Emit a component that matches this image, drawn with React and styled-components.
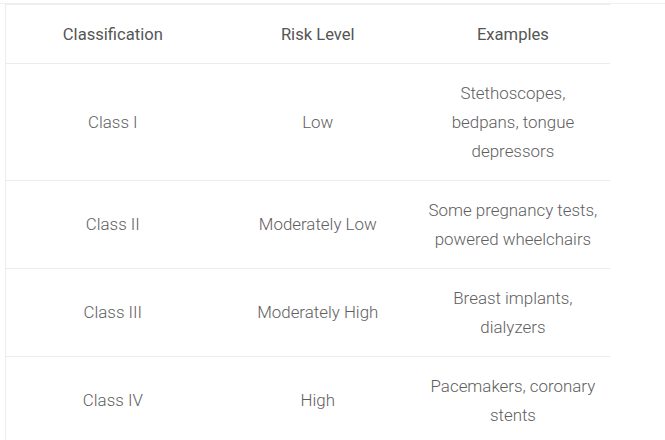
import React from "react";
import styled, { createGlobalStyle } from "styled-components";

const Global = createGlobalStyle`
  html, body { margin: 0; padding: 0; background: #fff; }
  body { padding-top: 3px; font-family: Roboto, "Liberation Sans", sans-serif; }
`;

const Frame = styled.div`
  border-top: 1px solid #efefef;
  padding-left: 5px;
`;

const Table = styled.table`
  border-collapse: collapse;
  table-layout: fixed;
  width: 605px;
  border-left: 1px solid #ececec;
  border-top: 1px solid #ececec;
`;

const Col = styled.col`
  width: ${(p) => p.$w}px;
`;

const HeadCell = styled.th`
  font-weight: 400;
  font-size: 16.6px;
  line-height: 29px;
  color: #555;
  text-align: center;
  padding: 14.5px 6px;
  border-bottom: 1px solid #ececec;
  white-space: nowrap;
`;

const Cell = styled.td`
  font-weight: 300;
  font-size: 16.9px;
  line-height: 29px;
  color: #5e5e5e;
  text-align: center;
  vertical-align: middle;
  padding: 14.5px 6px;
  border-bottom: 1px solid #ececec;
  white-space: nowrap;
`;

const rows = [
  { c: "Class I", r: "Low", e: ["Stethoscopes,", "bedpans, tongue", "depressors"] },
  { c: "Class II", r: "Moderately Low", e: ["Some pregnancy tests,", "powered wheelchairs"] },
  { c: "Class III", r: "Moderately High", e: ["Breast implants,", "dialyzers"] },
  { c: "Class IV", r: "High", e: ["Pacemakers, coronary", "stents"] },
];

export default function App() {
  return (
    <>
      <Global />
      <Frame>
        <Table>
          <colgroup>
            <Col $w={214} />
            <Col $w={196} />
            <Col $w={194} />
          </colgroup>
          <thead>
            <tr>
              <HeadCell>Classification</HeadCell>
              <HeadCell>Risk Level</HeadCell>
              <HeadCell>Examples</HeadCell>
            </tr>
          </thead>
          <tbody>
            {rows.map((row) => (
              <tr key={row.c}>
                <Cell>{row.c}</Cell>
                <Cell>{row.r}</Cell>
                <Cell>
                  {row.e.map((line, i) => (
                    <React.Fragment key={i}>
                      {i > 0 && <br />}
                      {line}
                    </React.Fragment>
                  ))}
                </Cell>
              </tr>
            ))}
          </tbody>
        </Table>
      </Frame>
    </>
  );
}
